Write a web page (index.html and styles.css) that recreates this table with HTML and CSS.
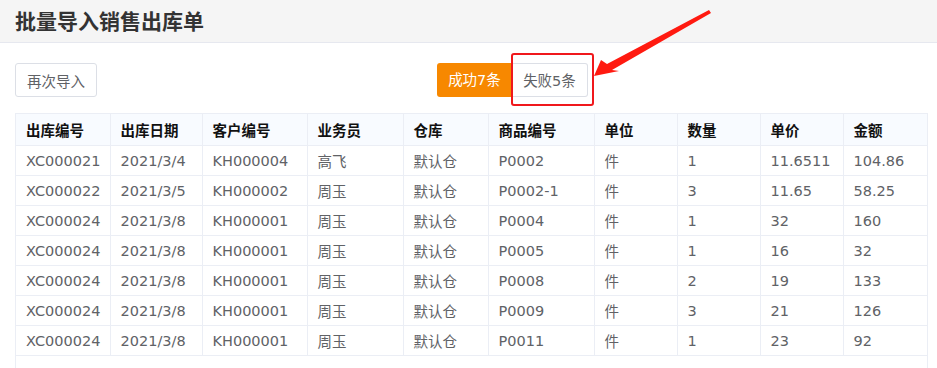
FILE: index.html
```html
<!DOCTYPE html>
<html>
<head>
    <meta charset="utf-8">
    <title>批量导入销售出库单</title>
    <link rel="stylesheet" href="styles.css">
</head>
<body>
    <div class="page_head">批量导入销售出库单</div>

    <div class="toolbar">
        <button class="btn">再次导入</button>
        <div class="tabs">
            <span class="tab ok">成功7条</span>
            <span class="tab fail">失败5条</span>
        </div>
    </div>

    <svg class="arrow" width="937" height="368" viewBox="0 0 937 368">
        <polygon points="594,76 601,60 607,64 709,10 711,13 612,70 619,71" fill="#ff1a10"/>
    </svg>

    <div class="grid_wrap">
        <table class="grid">
            <colgroup>
                <col style="width:94px"><col style="width:92px"><col style="width:105px"><col style="width:96px"><col style="width:85px">
                <col style="width:106px"><col style="width:83px"><col style="width:83px"><col style="width:83px"><col>
            </colgroup>
            <tr>
                <th>出库编号</th><th>出库日期</th><th>客户编号</th><th>业务员</th><th>仓库</th>
                <th>商品编号</th><th>单位</th><th>数量</th><th>单价</th><th>金额</th>
            </tr>
            <tr>
                <td>XC000021</td><td>2021/3/4</td><td>KH000004</td><td>高飞</td><td>默认仓</td>
                <td>P0002</td><td>件</td><td>1</td><td>11.6511</td><td>104.86</td>
            </tr>
            <tr>
                <td>XC000022</td><td>2021/3/5</td><td>KH000002</td><td>周玉</td><td>默认仓</td>
                <td>P0002-1</td><td>件</td><td>3</td><td>11.65</td><td>58.25</td>
            </tr>
            <tr>
                <td>XC000024</td><td>2021/3/8</td><td>KH000001</td><td>周玉</td><td>默认仓</td>
                <td>P0004</td><td>件</td><td>1</td><td>32</td><td>160</td>
            </tr>
            <tr>
                <td>XC000024</td><td>2021/3/8</td><td>KH000001</td><td>周玉</td><td>默认仓</td>
                <td>P0005</td><td>件</td><td>1</td><td>16</td><td>32</td>
            </tr>
            <tr>
                <td>XC000024</td><td>2021/3/8</td><td>KH000001</td><td>周玉</td><td>默认仓</td>
                <td>P0008</td><td>件</td><td>2</td><td>19</td><td>133</td>
            </tr>
            <tr>
                <td>XC000024</td><td>2021/3/8</td><td>KH000001</td><td>周玉</td><td>默认仓</td>
                <td>P0009</td><td>件</td><td>3</td><td>21</td><td>126</td>
            </tr>
            <tr>
                <td>XC000024</td><td>2021/3/8</td><td>KH000001</td><td>周玉</td><td>默认仓</td>
                <td>P0011</td><td>件</td><td>1</td><td>23</td><td>92</td>
            </tr>
        </table>
    </div>
</body>
</html>
```

FILE: styles.css
```css
html, body {
    margin: 0;
    padding: 0;
    background: #fff;
    font-family: "DejaVu Sans", "Noto Sans CJK SC", sans-serif;
    font-size: 14.5px;
    color: #606266;
    overflow: hidden;
    height: 368px;
}
.page_head {
    height: 43px;
    line-height: 40px;
    padding-left: 15px;
    background: #f5f5f5;
    border-bottom: 1px solid #e6e8ef;
    box-sizing: border-box;
    font-family: "Noto Sans CJK SC", sans-serif;
    font-size: 21px;
    font-weight: bold;
    color: #333;
}
.toolbar {
    display: flex;
    align-items: center;
    padding: 20px 15px 0 15px;
    height: 34px;
}
.btn {
    width: 82px;
    height: 34px;
    border: 1px solid #dcdfe6;
    border-radius: 3px;
    background: #fff;
    color: #606266;
    font-family: inherit;
    font-size: 14.5px;
    padding: 0;
}
.tabs {
    display: flex;
    margin-left: 340px;
}
.tab {
    display: inline-block;
    height: 34px;
    line-height: 34px;
    box-sizing: border-box;
    text-align: center;
}
.ok {
    width: 75px;
    background: #f78800;
    color: #fff;
    border-radius: 3px 0 0 3px;
}
.fail {
    width: 76px;
    border: 1px solid #dcdfe6;
    border-left: none;
    border-radius: 0 3px 3px 0;
    color: #606266;
    position: relative;
}
/* red highlight frame */
.fail::after {
    content: "";
    position: absolute;
    left: -1px;
    top: -11px;
    width: 83px;
    height: 53px;
    box-sizing: border-box;
    border: 2px solid #f0181c;
    border-radius: 3px;
}
.arrow {
    position: absolute;
    left: 0;
    top: 0;
    pointer-events: none;
}
.grid_wrap {
    margin: 16px 0 0 15px;
    width: 913px;
    box-sizing: border-box;
    border-left: 1px solid #ebeef5;
    border-right: 1px solid #ebeef5;
    height: 260px;
}
.grid {
    width: 100%;
    border-collapse: collapse;
    table-layout: fixed;
}
.grid th, .grid td {
    border: 1px solid #ebeef5;
    height: 29px;
    padding: 0 10px;
    text-align: left;
    white-space: nowrap;
}
.grid th:first-child, .grid td:first-child { border-left: none; }
.grid th:last-child, .grid td:last-child { border-right: none; }
.grid th {
    height: 31px;
    background: #f8fbff;
    color: #111;
    font-weight: bold;
}
```
